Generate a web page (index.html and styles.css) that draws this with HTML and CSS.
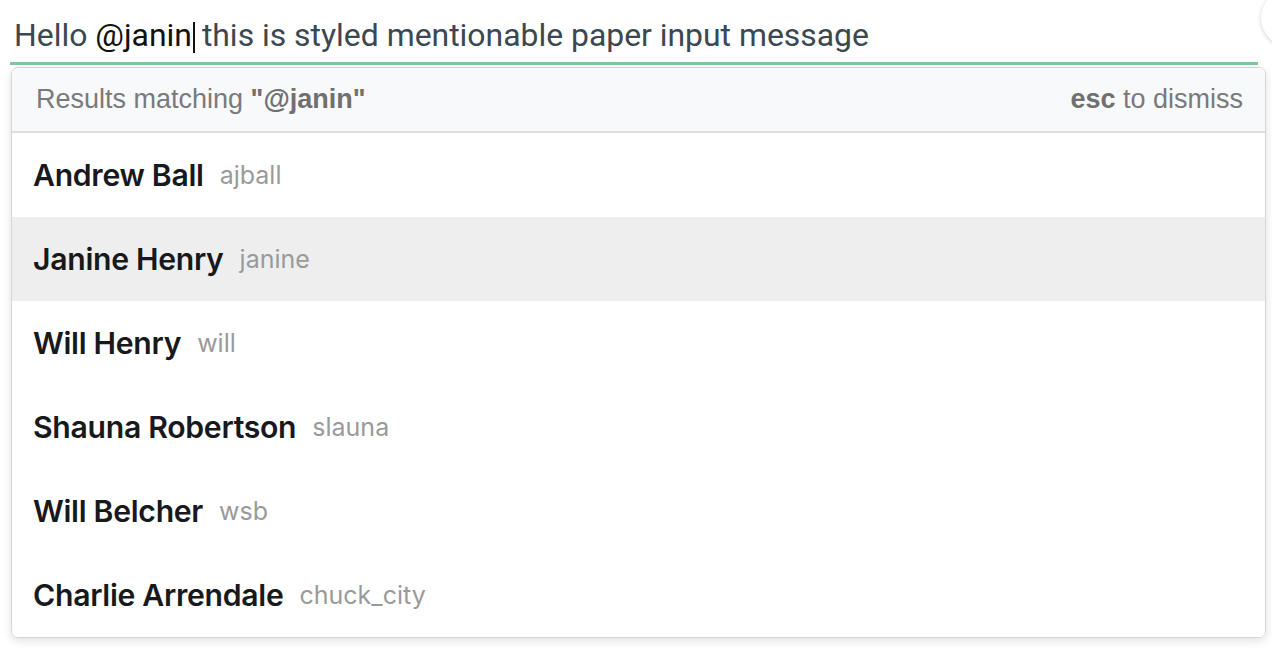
FILE: index.html
```html
<!DOCTYPE html>
<html>
<head>
<meta charset="utf-8">
<link rel="stylesheet" href="styles.css">
</head>
<body>
<div class="fab"></div>
<div class="field">
  <div class="input">Hello <span class="mention">@janin</span><span class="caret"></span>this is styled mentionable paper input message</div>
  <div class="underline"></div>
  <div class="dropdown">
    <div class="head">
      <span>Results matching <b>"@janin"</b></span>
      <span><b>esc</b> to dismiss</span>
    </div>
    <div class="row"><span class="name">Andrew Ball</span><span class="user">ajball</span></div>
    <div class="row active"><span class="name">Janine Henry</span><span class="user">janine</span></div>
    <div class="row"><span class="name">Will Henry</span><span class="user">will</span></div>
    <div class="row"><span class="name">Shauna Robertson</span><span class="user">slauna</span></div>
    <div class="row"><span class="name">Will Belcher</span><span class="user">wsb</span></div>
    <div class="row"><span class="name">Charlie Arrendale</span><span class="user">chuck_city</span></div>
  </div>
</div>
</body>
</html>
```
FILE: styles.css
```css
html, body {
  margin: 0;
  padding: 0;
  background: #fff;
  overflow: hidden;
}
body {
  width: 1272px;
  height: 658px;
  position: relative;
}
.fab {
  position: absolute;
  left: 1261px;
  top: -12px;
  width: 64px;
  height: 60px;
  border-radius: 50%;
  background: #fff;
  box-shadow: 0 1px 4px rgba(0,0,0,0.18);
}
.field {
  padding: 0 6px 0 10px;
}
.input {
  font-family: Roboto, "Liberation Sans", sans-serif;
  font-size: 31.9px;
  color: #3b4852;
  padding: 16px 0 0 4px;
  height: 46px;
  line-height: 38px;
  box-sizing: border-box;
  white-space: nowrap;
}
.mention { color: #111; }
.caret {
  display: inline-block;
  width: 2px;
  height: 31px;
  background: #111;
  vertical-align: -7px;
  margin-left: 1px;
  margin-right: 7px;
}
.underline {
  height: 3px;
  margin-top: 16px;
  margin-right: 8px;
  background: #80c8a0;
}
.dropdown {
  margin-top: 2px;
  margin-left: 1px;
  border: 1px solid #d6d6d6;
  border-radius: 7px;
  overflow: hidden;
  box-shadow: 0 3px 10px rgba(0,0,0,0.12);
}
.head {
  display: flex;
  justify-content: space-between;
  align-items: center;
  height: 63px;
  padding: 0 22px 0 24px;
  background: #f8f9fa;
  border-bottom: 2px solid #dedede;
  font-family: "Liberation Sans", Arial, sans-serif;
  font-size: 27px;
  color: #7a7a7a;
}
.head b { color: #707070; }
.row {
  height: 84px;
  display: flex;
  align-items: center;
  padding-left: 21px;
  background: #fff;
}
.row.active { background: #eeeeee; }
.name {
  font-family: Inter, "Liberation Sans", sans-serif;
  font-weight: 600;
  font-size: 30.2px;
  color: #17191c;
  letter-spacing: -0.3px;
}
.user {
  font-family: Inter, "Liberation Sans", sans-serif;
  font-size: 25px;
  color: #9a9a9a;
  margin-left: 16px;
  font-weight: 400;
}
```
